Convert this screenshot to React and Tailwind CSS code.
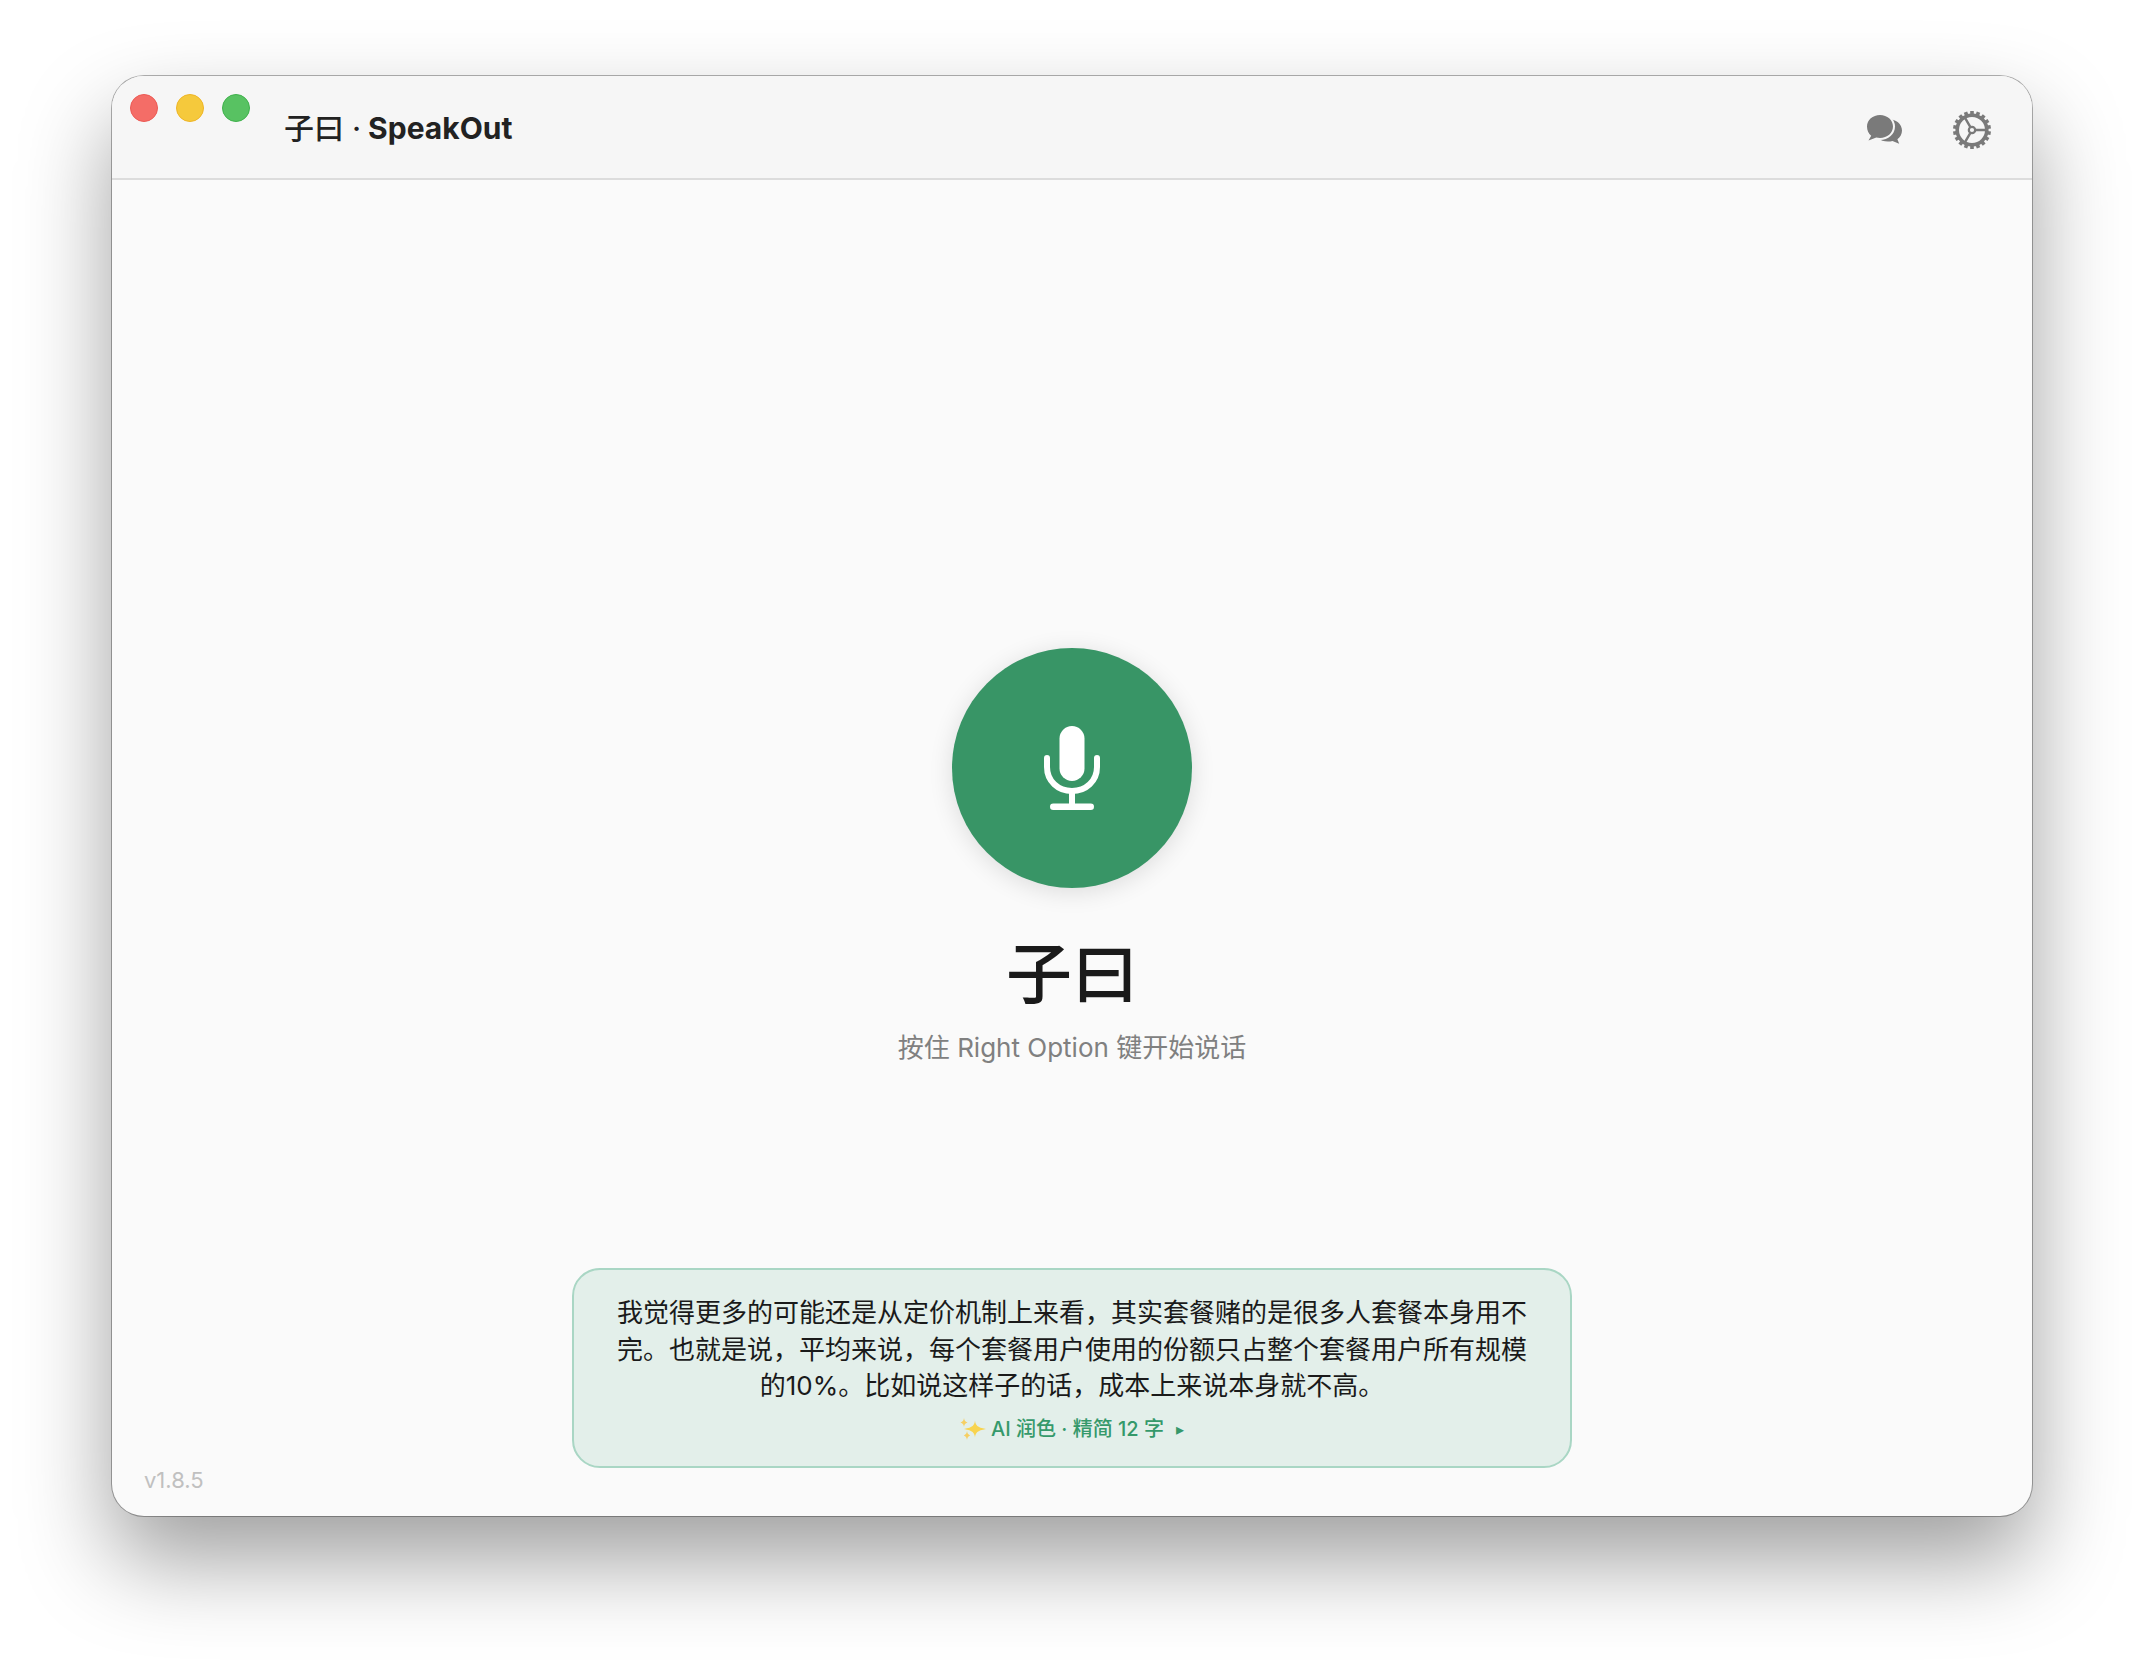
const teeth = Array.from({ length: 18 }, (_, i) => i * 20);

function ChatIcon() {
  return (
    <svg width="38" height="32" viewBox="0 0 38 32" className="block">
      <path d="M22 5c8 0 14 5 14 11.5 0 3.6-1.8 6.6-4.600 8.700l1.800 4.600-6.700-2.800c-1.400.4-3 .5-4.500.5-8 0-14-5-14-11S14 5 22 5z" fill="#7a7a7a" />
      <ellipse cx="14" cy="12.5" rx="15" ry="13.5" fill="#f6f6f6" />
      <path d="M14 1c7.200 0 13 5 13 11.500S21.200 24 14 24c-1.300 0-2.500-.2-3.700-.5L2.500 26.500l2.700-4.800C2.500 19.600 1 16.300 1 12.500 1 6 6.800 1 14 1z" fill="#7a7a7a" />
    </svg>
  );
}

function GearIcon() {
  return (
    <svg width="40" height="40" viewBox="0 0 40 40" className="block" fill="none" stroke="#7a7a7a">
      {teeth.map((deg) => (
        <rect key={deg} x="18.2" y="1" width="3.6" height="5" fill="#7a7a7a" stroke="none" transform={`rotate(${deg} 20 20)`} />
      ))}
      <circle cx="20" cy="20" r="14.8" strokeWidth="3.6" />
      <circle cx="20" cy="20" r="3.2" strokeWidth="2.2" />
      <path d="M23.2 20H35M18.4 17.2L12.6 7.2M18.4 22.8L12.6 32.8" strokeWidth="2.4" />
    </svg>
  );
}

function MicIcon() {
  return (
    <svg width="56" height="84" viewBox="0 0 56 84" className="block">
      <rect x="15.5" y="0" width="25" height="55" rx="12.5" fill="#fff" />
      <path d="M3 32v9c0 14 11 24 25 24s25-10 25-24v-9M28 65v15" fill="none" stroke="#fff" strokeWidth="6" strokeLinecap="round" />
      <rect x="6" y="77.5" width="44" height="6.5" rx="3.25" fill="#fff" />
    </svg>
  );
}

function SparkleIcon() {
  return (
    <svg width="26" height="22" viewBox="0 0 26 22" className="block">
      <path d="M15 2.5c.6 4.800 2 6.800 11 8.500-9 1.700-10.400 3.700-11 8.500-.6-4.800-2-6.800-11-8.500 9-1.700 10.400-3.700 11-8.500z" fill="#f8d44f" />
      <path d="M4 0c.3 2.500 1 3.300 3.600 4.500C5 5.700 4.300 6.500 4 9c-.3-2.500-1-3.300-3.600-4.500C3 3.300 3.700 2.500 4 0z" fill="#f6cf63" />
      <path d="M7 13c.3 2.500 1 3.200 3.200 4.500C8 18.700 7.300 19.500 7 22c-.3-2.500-1-3.300-3.200-4.500C6 16.200 6.700 15.500 7 13z" fill="#f6cf63" />
    </svg>
  );
}

export default function App() {
  return (
    <div className="min-h-screen bg-white pl-[112px] pt-[76px] font-['Inter','Noto_Sans_CJK_SC',sans-serif]">
      <div className="flex h-[1440px] w-[1920px] flex-col overflow-hidden rounded-[32px] bg-[#fafafa] shadow-[0_0_0_1px_rgba(0,0,0,0.3),0_44px_90px_rgba(0,0,0,0.38)]">
        <header className="flex h-[104px] shrink-0 border-b-2 border-[#dcdcdc] bg-[#f6f6f6] pl-[18px] pr-[40px]">
          <div className="mt-[18px] flex gap-[18px]">
            <div className="h-[28px] w-[28px] rounded-full border border-[#ec5a54] bg-[#f46d67]" />
            <div className="h-[28px] w-[28px] rounded-full border border-[#eeb526] bg-[#f5c93c]" />
            <div className="h-[28px] w-[28px] rounded-full border border-[#3fb14c] bg-[#58c262]" />
          </div>
          <div className="ml-[34px] mt-[1px] flex items-center text-[30px] leading-[44px] text-[#222222]">
            <span className="font-medium">子曰 · </span>
            <span className="ml-[7px] font-bold">SpeakOut</span>
          </div>
          <div className="ml-auto mt-[6px] flex items-center gap-[48px]">
            <ChatIcon />
            <GearIcon />
          </div>
        </header>

        <main className="flex flex-1 flex-col items-center pt-[468px]">
          <div className="flex h-[240px] w-[240px] items-center justify-center rounded-full bg-[#389566] shadow-[0_4px_24px_rgba(0,0,0,0.12)]">
            <MicIcon />
          </div>
          <h1 className="mt-[44px] text-[66px] font-medium leading-[84px] text-[#1a1a1a]">子曰</h1>
          <p className="mt-[12px] text-[26px] leading-[40px] text-[#808080]">按住 Right Option 键开始说话</p>

          <div className="mt-auto grid w-full grid-cols-[1fr_1000px_1fr] items-end pb-[22px]">
            <span className="pl-[32px] text-[22px] leading-[28px] text-[#c0c0c0]">v1.8.5</span>
            <section className="mb-[26px] flex h-[200px] flex-col items-center rounded-[28px] border-2 border-[#a9d6c4] bg-[#e3efea] px-[42px] pt-[25px]">
              <p className="text-center text-[26px] leading-[36.5px] text-[#1a1a1a]">
                我觉得更多的可能还是从定价机制上来看，其实套餐赌的是很多人套餐本身用不完。也就是说，平均来说，每个套餐用户使用的份额只占整个套餐用户所有规模的10%。比如说这样子的话，成本上来说本身就不高。
              </p>
              <div className="mt-[10px] flex items-center text-[20px] font-medium leading-[28px] text-[#35996a]">
                <SparkleIcon />
                <span className="ml-[5px]">AI 润色 · 精简 12 字</span>
                <span className="ml-[12px] text-[16px]">▸</span>
              </div>
            </section>
            <div />
          </div>
        </main>
      </div>
    </div>
  );
}
